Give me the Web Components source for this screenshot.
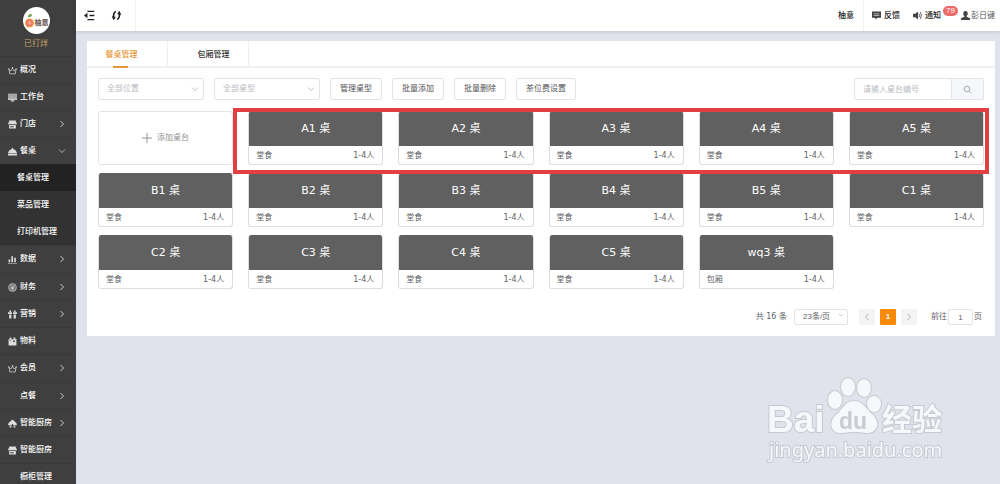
<!DOCTYPE html>
<html lang="zh-CN">
<head>
<meta charset="utf-8">
<meta name="viewport" content="width=device-width, initial-scale=1">
<title>餐桌管理</title>
<style>
    body {
        margin: 0;
        background: #e0e3ec;
        color: #606266;
        font: 8px/12px "Liberation Sans", "Noto Sans CJK SC", sans-serif;
    }
</style>
</head>
<body>
<pos-app></pos-app>

<script>
(function() {
    const icons = {
        crown: '<path d="M2 6l3 3 3-5 3 5 3-3-1 8H3z" fill="none" stroke="currentColor" stroke-width="1.3"/><circle cx="8" cy="3" r="1.3"/><circle cx="1.5" cy="5.5" r="1.3"/><circle cx="14.5" cy="5.5" r="1.3"/>',
        monitor: '<path d="M0 1h16v11H0z" fill="#a5a5a5"/><path d="M0 10h16v2H0zM5 13h6v2H5z"/>',
        shop: '<path d="M2 1h12v3H2zM1 4h14l1 4H0zM2 9h12v6H2z"/><path d="M1 7h14v1H1zM4 11h6v2H4z" fill="#3f3f3f"/>',
        dish: '<path d="M8 1l2 3c3 1 5 3 6 7H0c1-4 3-6 6-7zM0 12h16v3H0z"/>',
        chart: '<path d="M1 8h3v5H1zM6 2h3v11H6zM11 5h3v8h-3zM0 14h16v1H0z"/>',
        coin: '<circle cx="8" cy="8" r="7" fill="#777" stroke="currentColor"/><path d="M5 4l3 4 3-4M5 8h6M5 10h6M8 8v5" fill="none" stroke="currentColor"/>',
        gift: '<path d="M0 4h7v3H0zM9 4h7v3H9zM2 8h4v7H2zM10 8h4v7h-4z"/><path d="M4 4V1M12 4V1" stroke="currentColor" stroke-width="3"/>',
        box: '<path d="M1 4h14v11H1zM3 1h3v3H3zM10 1h3v3h-3z"/><path d="M9 6h3v3H9zM3 6h3v1H3z" fill="#3f3f3f"/>',
        kitchen: '<path d="M8 1l7 6 1 4H0l1-4zM3 12h3v3H3zM10 12h3v3h-3z"/><path d="M7 9h2v6H7z" fill="#3f3f3f"/>',
        right: '<path d="M5 2l6 6-6 6" fill="none" stroke="currentColor" stroke-width="2"/>',
        left: '<path d="M11 2L5 8l6 6" fill="none" stroke="currentColor" stroke-width="2"/>',
        down: '<path d="M2 5l6 6 6-6" fill="none" stroke="currentColor" stroke-width="1.6"/>',
        fold: '<path d="M5 2h10M8 8h7M5 14h10" fill="none" stroke="currentColor" stroke-width="2"/><path d="M0 8l5-4v8z"/>',
        refresh: '<path d="M7 2C4 4 3 7 4 12M9 14c3-2 4-5 3-10" fill="none" stroke="currentColor" stroke-width="2.4"/><path d="M1 9l6 1-3 5zM15 7L9 6l3-5z"/>',
        message: '<path d="M0 1h16v11h-6l-4 3v-3H0z"/><path d="M3 5h10M3 8h10" stroke="#fff"/>',
        horn: '<path d="M0 5h4l5-4v14l-5-4H0z"/><path d="M11 5q2 3 0 6M13 2q4 6 0 12" fill="none" stroke="currentColor" stroke-width="1.5"/>',
        user: '<path d="M8 0c3 0 4 2 4 5 0 2-1 3-2 4v1l6 3v3H0v-3l6-3V9C5 8 4 7 4 5c0-3 1-5 4-5z"/>',
        search: '<circle cx="7" cy="7" r="5" fill="none" stroke="currentColor" stroke-width="1.4"/><path d="M11 11l4 4" stroke="currentColor" stroke-width="1.4"/>',
        plus: '<path d="M8 0v16M0 8h16" stroke="currentColor" stroke-width="1.5"/>'
    };

    function define(name, markup, setup) {
        const template = document.createElement('template');
        template.innerHTML = markup;
        customElements.define(name, class extends HTMLElement {
            constructor() {
                super();
                this.attachShadow({ mode: 'open' });
                this.shadowRoot.appendChild(template.content.cloneNode(true));
            }
            connectedCallback() {
                if (setup) setup(this, this.shadowRoot);
            }
        });
    }

    define('pos-icon', `
        <style>
            :host { display: inline-block; width: 9px; height: 9px; flex: none; }
            svg { display: block; width: 100%; height: 100%; fill: currentColor; }
        </style>
        <svg viewBox="0 0 16 16" aria-hidden="true"></svg>
    `, (el, root) => {
        root.querySelector('svg').innerHTML = icons[el.getAttribute('name')] || '';
    });

    define('pos-brand', `
        <style>
            :host {
                display: flex;
                flex-direction: column;
                align-items: center;
                gap: 4px;
                height: 49px;
                padding: 7px 4px 0 0;
                color: #c9a265;
            }
            svg { display: block; width: 27px; height: 27px; }
        </style>
        <svg viewBox="0 0 54 54" aria-hidden="true">
            <circle cx="27" cy="27" r="27" fill="#fff"/>
            <circle cx="13" cy="32" r="9" fill="#f4a64e"/>
            <circle cx="13" cy="32" r="7" fill="#ee6b5b"/>
            <path d="M13 26v12M7 32h12M9 28l8 8M17 28l-8 8" stroke="#fbd0a8"/>
            <path d="M10 20c0-5 4-7 8-5 0 4-3 6-8 5z" fill="#77a24b"/>
            <text x="23" y="36" font-size="14" font-weight="700" fill="#665247">柚意</text>
        </svg>
        <slot></slot>
    `);

    define('pos-menu-item', `
        <style>
            :host { display: block; }
            a {
                display: flex;
                align-items: center;
                box-sizing: border-box;
                height: 27px;
                padding: 0 10px 0 8px;
                border-top: 1px solid #393939;
                color: #fff;
                font-weight: 500;
                text-decoration: none;
                white-space: nowrap;
            }
            .icon { margin-right: 3px; color: #ddd; }
            .arrow { width: 8px; height: 8px; margin-left: auto; color: #ccc; }
            :host([sub]) a { padding-left: 17px; border-top-color: transparent; background: #323232; }
            :host([active]) a { background: #222; }
            :host([sub]) .icon { display: none; }
        </style>
        <a href="#"><pos-icon class="icon"></pos-icon><slot></slot></a>
    `, (el, root) => {
        root.querySelector('.icon').setAttribute('name', el.getAttribute('icon') || '');
        root.querySelector('.icon').connectedCallback();
        if (el.hasAttribute('arrow')) {
            const arrow = document.createElement('pos-icon');
            arrow.className = 'arrow';
            arrow.setAttribute('name', el.getAttribute('arrow'));
            root.querySelector('a').appendChild(arrow);
        }
    });

    define('pos-sidebar', `
        <style>
            :host { display: block; height: 100vh; overflow: hidden; background: #3f3f3f; }
            .group + .group { padding-top: 1px; }
        </style>
        <pos-brand>已打烊</pos-brand>
        <nav>
            <div class="group">
                <pos-menu-item icon="crown">概况</pos-menu-item>
                <pos-menu-item icon="monitor">工作台</pos-menu-item>
                <pos-menu-item icon="shop" arrow="right">门店</pos-menu-item>
                <pos-menu-item icon="dish" arrow="down">餐桌</pos-menu-item>
                <pos-menu-item sub active>餐桌管理</pos-menu-item>
                <pos-menu-item sub>菜品管理</pos-menu-item>
                <pos-menu-item sub>打印机管理</pos-menu-item>
                <pos-menu-item icon="chart" arrow="right">数据</pos-menu-item>
            </div>
            <div class="group">
                <pos-menu-item icon="coin" arrow="right">财务</pos-menu-item>
                <pos-menu-item icon="gift" arrow="right">营销</pos-menu-item>
                <pos-menu-item icon="box">物料</pos-menu-item>
                <pos-menu-item icon="crown" arrow="right">会员</pos-menu-item>
            </div>
            <div class="group">
                <pos-menu-item arrow="right">点餐</pos-menu-item>
                <pos-menu-item icon="kitchen" arrow="right">智能厨房</pos-menu-item>
                <pos-menu-item icon="shop">智能厨房</pos-menu-item>
                <pos-menu-item>橱柜管理</pos-menu-item>
            </div>
        </nav>
    `);

    define('pos-topbar', `
        <style>
            :host {
                display: flex;
                height: 31px;
                background: #fff;
                box-shadow: 0 1px 4px rgba(0, 21, 41, .15);
            }
            .tools, .links { display: flex; align-items: center; }
            .tools { gap: 16px; padding: 0 13px 0 8px; border-right: 1px solid #f0f0f0; }
            .shop { display: flex; align-items: center; margin-left: auto; padding-right: 9px; border-right: 1px solid #f0f0f0; }
            .links { padding: 0 5px 0 8px; }
            button, a {
                display: flex;
                align-items: center;
                gap: 3px;
                padding: 0;
                border: 0;
                background: none;
                color: #222;
                font: inherit;
                font-weight: 500;
                text-decoration: none;
            }
            .tools pos-icon { width: 11px; height: 11px; }
            .links pos-icon { color: #444; }
            .notice { margin-left: 13px; }
            .badge {
                align-self: flex-start;
                margin: 6px 3px 0 2px;
                padding: 0 3px;
                border-radius: 5px;
                background: #ef6b6b;
                color: #fff;
                line-height: 10px;
            }
            .links .user { gap: 1px; color: #555; font-weight: 400; }
        </style>
        <div class="tools">
            <button aria-label="收起菜单"><pos-icon name="fold"></pos-icon></button>
            <button aria-label="刷新"><pos-icon name="refresh"></pos-icon></button>
        </div>
        <div class="shop"><a href="#">柚意</a></div>
        <div class="links">
            <a href="#"><pos-icon name="message"></pos-icon>反馈</a>
            <a href="#" class="notice"><pos-icon name="horn"></pos-icon>通知</a>
            <span class="badge">79</span>
            <a href="#" class="user"><pos-icon name="user"></pos-icon>彭日键</a>
        </div>
    `);

    define('pos-tabs', `
        <style>
            :host { display: flex; height: 25px; border-bottom: 2px solid #efefef; }
            button {
                display: flex;
                flex-direction: column;
                justify-content: center;
                align-items: center;
                position: relative;
                box-sizing: border-box;
                width: 81px;
                padding: 3px 11px 0 0;
                border: 0;
                border-right: 1px solid #eee;
                background: none;
                color: #333;
                font: inherit;
                font-weight: 500;
            }
            button + button { padding: 3px 0 0 11px; }
            .active { color: #e6973a; }
            .active::after {
                content: "";
                position: absolute;
                left: 26px;
                bottom: -2px;
                width: 15px;
                height: 2px;
                background: #e6973a;
            }
        </style>
        <button class="active">餐桌管理</button>
        <button>包厢管理</button>
    `);

    define('pos-select', `
        <style>
            :host { display: grid; align-items: center; width: 106px; height: 22px; color: #b8bbc2; }
            select {
                grid-area: 1 / 1;
                box-sizing: border-box;
                width: 100%;
                height: 100%;
                padding: 0 8px;
                border: 1px solid #e2e4e9;
                border-radius: 2px;
                appearance: none;
                background: #fff;
                color: inherit;
                font: inherit;
            }
            pos-icon { grid-area: 1 / 1; justify-self: end; width: 8px; height: 8px; margin-right: 5px; color: #b0b3ba; pointer-events: none; }
            :host([small]) { width: 54px; height: 16px; color: #606266; }
            :host([small]) pos-icon { width: 6px; height: 6px; margin: 0 4px 4px 0; }
        </style>
        <select><option></option></select>
        <pos-icon name="down"></pos-icon>
    `, (el, root) => {
        root.querySelector('option').textContent = el.getAttribute('value');
        root.querySelector('select').setAttribute('aria-label', el.getAttribute('label'));
    });

    define('pos-filters', `
        <style>
            :host { display: flex; gap: 10px; }
            button {
                height: 22px;
                padding: 0 9px;
                border: 1px solid #e2e4e9;
                border-radius: 2px;
                background: #fff;
                color: #505256;
                font: inherit;
            }
            form { display: flex; width: 130px; margin-left: auto; }
            input {
                flex: 1;
                box-sizing: border-box;
                min-width: 0;
                height: 22px;
                padding: 0 8px;
                border: 1px solid #e2e4e9;
                border-radius: 2px 0 0 2px;
                font: inherit;
            }
            input::placeholder { color: #b8bbc2; opacity: 1; }
            form button { width: 32px; border-left: 0; border-radius: 0 2px 2px 0; background: #f5f7fa; color: #909399; }
            form pos-icon { display: block; margin: auto; }
        </style>
        <pos-select value="全部位置" label="位置"></pos-select>
        <pos-select value="全部桌型" label="桌型"></pos-select>
        <button>管理桌型</button>
        <button>批量添加</button>
        <button>批量删除</button>
        <button>茶位费设置</button>
        <form>
            <input type="text" placeholder="请输入桌台编号" aria-label="桌台编号">
            <button type="button" aria-label="搜索"><pos-icon name="search"></pos-icon></button>
        </form>
    `);

    define('table-card', `
        <style>
            :host {
                display: block;
                box-sizing: border-box;
                height: 54px;
                border: 1px solid #ddd;
                border-top: 0;
                border-radius: 3px;
                overflow: hidden;
                font-family: "DejaVu Sans", "Noto Sans CJK SC", sans-serif;
            }
            .name {
                padding-top: 1px;
                background: #606060;
                color: #fff;
                font-size: 11px;
                line-height: 34px;
                text-align: center;
            }
            .info { display: flex; justify-content: space-between; padding: 0 8px 0 7px; line-height: 19px; }
        </style>
        <div class="name"><slot></slot></div>
        <div class="info"><span class="area"></span><span>1-4人</span></div>
    `, (el, root) => {
        root.querySelector('.area').textContent = el.getAttribute('area') || '堂食';
    });

    define('table-grid', `
        <style>
            :host {
                display: grid;
                grid-template-columns: repeat(6, minmax(0, 1fr));
                gap: 8px 15px;
            }
            .add {
                grid-area: 1 / 1;
                display: flex;
                justify-content: center;
                align-items: center;
                gap: 5px;
                height: 54px;
                border: 1px solid #e2e4e9;
                border-radius: 3px;
                background: #fff;
                color: #909090;
                font: inherit;
            }
            .add pos-icon { width: 10px; height: 10px; }
            /* frame round the tables of the first row */
            .frame {
                grid-column: 2 / -1;
                grid-row: 1;
                z-index: 1;
                margin: -3px -5px -9px -15px;
                border: 4px solid #e04042;
                pointer-events: none;
            }
        </style>
        <button class="add"><pos-icon name="plus"></pos-icon>添加桌台</button>
        <div class="frame"></div>
    `, (el, root) => {
        const names = ['A1', 'A2', 'A3', 'A4', 'A5', 'B1', 'B2', 'B3', 'B4', 'B5', 'C1', 'C2', 'C3', 'C4', 'C5', 'wq3'];
        names.forEach((name, i) => {
            const card = document.createElement('table-card');
            card.textContent = name + ' 桌';
            if (name === 'wq3') card.setAttribute('area', '包厢');
            // the first cell holds the add button
            card.style.gridArea = (Math.floor((i + 1) / 6) + 1) + ' / ' + ((i + 1) % 6 + 1);
            root.appendChild(card);
        });
    });

    define('pos-pagination', `
        <style>
            :host { display: flex; justify-content: flex-end; align-items: center; padding-right: 2px; }
            .total { margin-right: 7px; font-family: "DejaVu Sans", "Noto Sans CJK SC", sans-serif; }
            .pages { display: flex; gap: 5px; margin: 0 14px 0 11px; }
            button {
                width: 16px;
                height: 16px;
                padding: 0;
                border: 0;
                border-radius: 1px;
                background: #f4f4f5;
                color: #b0b3ba;
                font: inherit;
            }
            button pos-icon { display: block; width: 8px; height: 8px; margin: auto; }
            .current { background: #f78a0b; color: #fff; font-weight: 700; }
            label { display: flex; align-items: center; gap: 1px; }
            input {
                box-sizing: border-box;
                width: 25px;
                height: 16px;
                padding: 0;
                border: 1px solid #e2e4e9;
                border-radius: 2px;
                color: inherit;
                font: inherit;
                text-align: center;
            }
        </style>
        <span class="total">共 16 条</span>
        <pos-select small value="23条/页" label="每页条数"></pos-select>
        <div class="pages">
            <button aria-label="上一页"><pos-icon name="left"></pos-icon></button>
            <button class="current">1</button>
            <button aria-label="下一页"><pos-icon name="right"></pos-icon></button>
        </div>
        <label>前往<input type="text" value="1">页</label>
    `);

    define('site-watermark', `
        <style>
            :host { position: fixed; right: 50px; bottom: 18px; width: 184px; height: 92px; pointer-events: none; }
            svg { display: block; width: 100%; height: 100%; overflow: visible; }
            .mark { fill: #f6f8fb; stroke: #c6c9d1; stroke-width: 2; paint-order: stroke; }
        </style>
        <svg viewBox="0 0 184 92" aria-hidden="true">
            <g class="mark" font-weight="700">
                <text x="1" y="58" font-size="37">Bai</text>
                <ellipse cx="69" cy="26" rx="7" ry="9"/>
                <ellipse cx="82" cy="13" rx="7" ry="9"/>
                <ellipse cx="98" cy="14" rx="7" ry="9"/>
                <ellipse cx="108" cy="30" rx="7" ry="8"/>
                <path d="M88 27c-9 0-11 8-17 13-8 6-8 18 3 19 6 0 8-1 14-1s8 1 14 1c11-1 12-12 4-19-6-5-9-13-18-13z"/>
                <text x="116" y="56" font-size="30">经验</text>
            </g>
            <text x="73" y="55" font-size="23" font-weight="700" fill="#c9ccd5">du</text>
            <text class="mark" x="3" y="83" font-size="20" font-family="Noto Sans">jingyan.baidu.com</text>
        </svg>
    `);

    define('pos-app', `
        <style>
            :host { display: grid; grid-template-columns: 76px minmax(0, 1fr); }
            main { margin: 10px 5px 0 11px; background: #fff; }
            .body { padding: 10px 11px 11px; }
            table-grid { margin-top: 11px; }
            pos-pagination { margin-top: 20px; }
        </style>
        <pos-sidebar></pos-sidebar>
        <div>
            <pos-topbar></pos-topbar>
            <main>
                <pos-tabs></pos-tabs>
                <div class="body">
                    <pos-filters></pos-filters>
                    <table-grid></table-grid>
                    <pos-pagination></pos-pagination>
                </div>
            </main>
        </div>
        <site-watermark></site-watermark>
    `);
})();
</script>
</body>
</html>
